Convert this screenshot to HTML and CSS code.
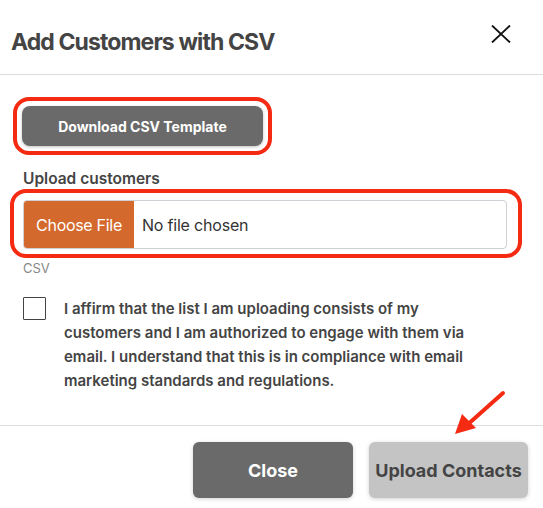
FILE: index.html
```html
<!DOCTYPE html>
<html lang="en">
<head>
  <meta charset="UTF-8">
  <title>Add Customers with CSV</title>
  <link rel="stylesheet" href="styles.css">
</head>
<body>

  <div class="modal">
    <header class="modal-header">
      <h1>Add Customers with CSV</h1>
      <span class="close-x">
        <svg width="20" height="18" viewBox="0 0 20 18">
          <path d="M1 0.5 L19 17.5 M19 0.5 L1 17.5" stroke="#111" stroke-width="1.8" fill="none"/>
        </svg>
      </span>
    </header>

    <div class="modal-body">
      <!-- highlighted template button -->
      <div class="ring ring-download">
        <button class="btn-download">Download CSV Template</button>
      </div>

      <label class="field-label">Upload customers</label>
      <div class="ring ring-file">
        <div class="file-input">
          <span class="file-btn">Choose File</span>
          <span class="file-name">No file chosen</span>
        </div>
      </div>
      <div class="field-help">CSV</div>

      <div class="affirm">
        <span class="checkbox"></span>
        <p>I affirm that the list I am uploading consists of my customers and I am authorized to engage with them via email. I understand that this is in compliance with email marketing standards and regulations.</p>
      </div>
    </div>

    <footer class="modal-footer">
      <button class="btn btn-close">Close</button>
      <button class="btn btn-upload">Upload Contacts</button>
    </footer>

    <svg class="arrow" width="60" height="52" viewBox="0 0 60 52">
      <path d="M53 5 L16 38" stroke="#f42a12" stroke-width="4" stroke-linecap="round" fill="none"/>
      <path d="M5 46 L12 26 L26 40 Z" fill="#f42a12"/>
    </svg>
  </div>

</body>
</html>
```

FILE: styles.css
```css
* {
  box-sizing: border-box;
}

body {
  margin: 0;
  background: #ffffff;
  font-family: Inter, "Liberation Sans", Arial, sans-serif;
  color: #444;
}

.modal {
  position: relative;
  width: 543px;
  height: 508px;
  overflow: hidden;
}

.modal-header {
  height: 75px;
  display: flex;
  align-items: flex-start;
  justify-content: space-between;
  padding: 27px 32px 0 11px;
  border-bottom: 1px solid #dcdcdc;
}

.modal-header h1 {
  margin: 0;
  font-size: 23px;
  line-height: 30px;
  font-weight: 700;
  letter-spacing: -0.9px;
  color: #444;
}

.close-x {
  display: flex;
  margin-top: -2px;
}

.modal-body {
  padding: 22px 22px 0;
  height: 350px;
}

.ring {
  border: 4px solid #f42a12;
  border-radius: 16px;
}

.ring-download {
  display: inline-block;
  margin-left: -9px;
  padding: 5px;
}

.btn-download {
  display: block;
  width: 241px;
  height: 40px;
  border: none;
  border-radius: 8px;
  background: #6a6a6a;
  color: #fff;
  font-family: inherit;
  font-size: 14px;
  font-weight: 700;
  box-shadow: 0 1px 3px rgba(0,0,0,0.25);
}

.field-label {
  display: block;
  margin: 14px 0 0 1px;
  font-size: 15.5px;
  font-weight: 600;
  line-height: 20px;
  color: #444;
}

.ring-file {
  margin: 0 -1px 0 -12px;
  padding: 7px 11px 5px 9px;
}

.file-input {
  display: flex;
  align-items: stretch;
  height: 49px;
  border: 1px solid #d0d0d6;
  border-radius: 4px;
  overflow: hidden;
}

.file-btn {
  display: flex;
  align-items: center;
  justify-content: center;
  flex: none;
  width: 110px;
  white-space: nowrap;
  background: #d4692e;
  color: #fff;
  font-size: 16px;
  letter-spacing: -0.3px;
}

.file-name {
  display: flex;
  align-items: center;
  padding-left: 8px;
  font-size: 16px;
  letter-spacing: -0.2px;
  color: #333;
}

.field-help {
  margin: 2px 0 0 1px;
  font-size: 13px;
  color: #888;
}

.affirm {
  display: flex;
  gap: 18px;
  margin-top: 21px;
}

.checkbox {
  flex: none;
  width: 23px;
  height: 23px;
  margin-left: 1px;
  border: 1.5px solid #444;
  border-radius: 1px;
}

.affirm p {
  margin: 0;
  width: 420px;
  font-size: 15px;
  font-weight: 600;
  line-height: 24px;
  color: #444;
}

.modal-footer {
  display: flex;
  justify-content: flex-end;
  gap: 16px;
  padding: 16px 15px 0;
  border-top: 1px solid #dcdcdc;
}

.btn {
  height: 56px;
  border: none;
  border-radius: 6px;
  font-family: inherit;
  font-size: 18px;
  font-weight: 700;
  box-shadow: 0 1px 4px rgba(0,0,0,0.18);
}

.btn-close {
  width: 160px;
  background: #6a6a6a;
  color: #fff;
}

.btn-upload {
  width: 159px;
  background: #c4c4c4;
  color: #444;
}

.arrow {
  position: absolute;
  left: 450px;
  top: 388px;
}
```
